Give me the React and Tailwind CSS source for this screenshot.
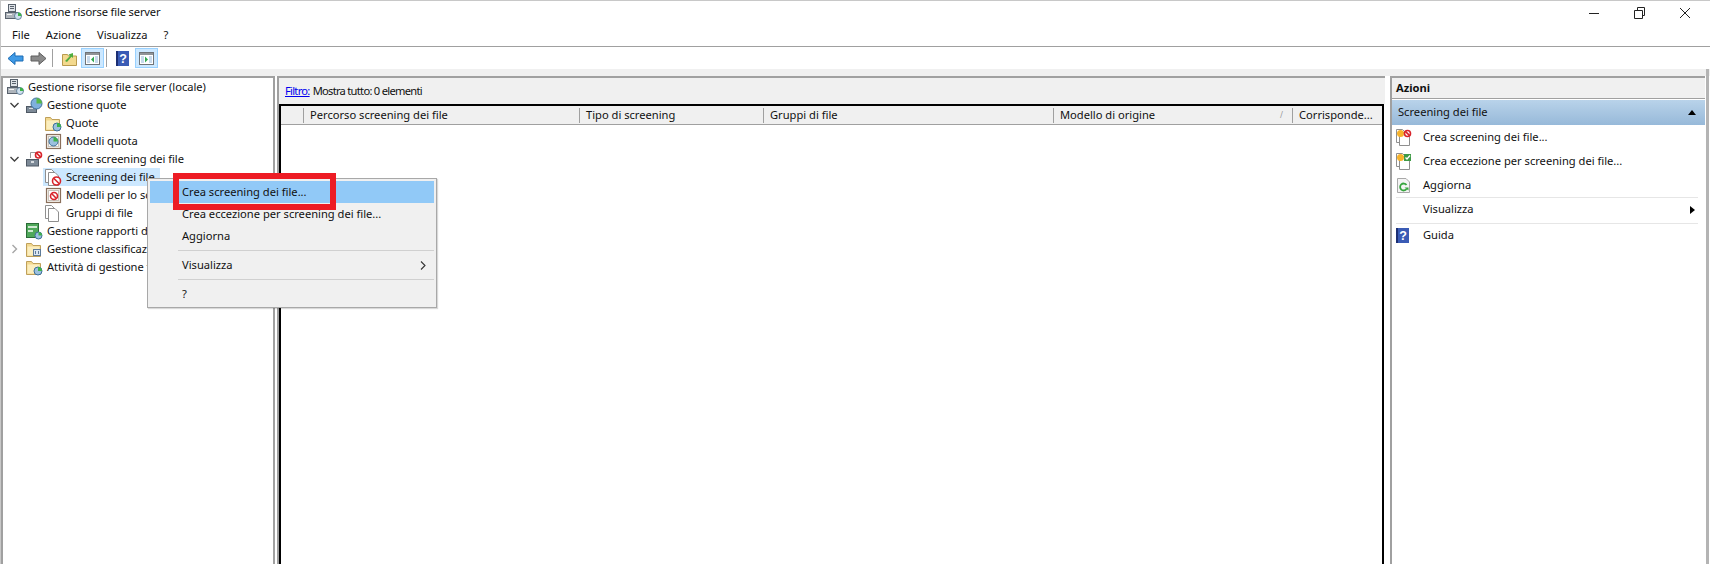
import React from "react";

const uiFont = { fontFamily: '"Noto Sans", "Open Sans", sans-serif' };

function ServerIcon() {
  return (
    <svg width="17" height="17" viewBox="0 0 17 17" className="shrink-0">
      <rect x="3.5" y="0.5" width="7" height="7" fill="#dfe3e8" stroke="#59626d" />
      <rect x="5" y="2" width="4" height="1" fill="#59626d" />
      <rect x="5" y="4" width="4" height="1" fill="#59626d" />
      <rect x="0.5" y="8.5" width="12" height="6" fill="#aeb4bb" stroke="#59626d" />
      <rect x="2" y="10" width="5" height="1" fill="#f4f4f4" />
      <circle cx="13" cy="12" r="3.5" fill="#cfe0ee" stroke="#4c6f8c" strokeWidth="0.8" />
      <path d="M13 12V8.5A3.5 3.5 0 0 1 16.5 12Z" fill="#3fb24a" />
    </svg>
  );
}

function QuotaIcon() {
  return (
    <svg width="17" height="17" viewBox="0 0 17 17" className="shrink-0">
      <rect x="0.5" y="9.5" width="10" height="6" fill="#7d8a97" stroke="#4f5964" />
      <rect x="3" y="11" width="4" height="1" fill="#d9dde1" />
      <circle cx="10.5" cy="6.5" r="5.5" fill="#7fb0dc" stroke="#3d6f99" />
      <path d="M10.5 6.5V1A5.5 5.5 0 0 1 16 6.5Z" fill="#58b947" />
    </svg>
  );
}

function FolderIcon({ children }) {
  return (
    <svg width="17" height="17" viewBox="0 0 17 17" className="shrink-0">
      <path d="M0.5 2.5H5.5L7 4.5H14.5V15.5H0.5Z" fill="#f2d88f" stroke="#bfa05a" />
      <rect x="1.5" y="5.5" width="12" height="9" fill="#fbeebf" />
      {children}
    </svg>
  );
}

function ClockBadge() {
  return (
    <>
      <circle cx="12" cy="12" r="4" fill="#9cc0de" stroke="#3d6f99" />
      <path d="M12 12V8A4 4 0 0 1 16 12Z" fill="#3fb24a" />
    </>
  );
}

function TemplateIcon({ children }) {
  return (
    <svg width="17" height="17" viewBox="0 0 17 17" className="shrink-0">
      <rect x="1.5" y="1.5" width="14" height="14" fill="#f6f3ee" stroke="#8a6f5b" strokeWidth="1.2" />
      <rect x="3.5" y="3.5" width="10" height="10" fill="#fff" stroke="#c9c3bb" />
      {children}
    </svg>
  );
}

function NoSign({ cx = 11, cy = 11, r = 4 }) {
  return (
    <>
      <circle cx={cx} cy={cy} r={r} fill="#fff" stroke="#d8242b" strokeWidth="1.6" />
      <path d={`M${cx - r * 0.7} ${cy - r * 0.7}L${cx + r * 0.7} ${cy + r * 0.7}`} stroke="#d8242b" strokeWidth="1.6" />
    </>
  );
}

function PageIcon({ children }) {
  return (
    <svg width="17" height="17" viewBox="0 0 17 17" className="shrink-0">
      <path d="M0.5 0.5H6.5L9.5 3.5V13.5H0.5Z" fill="#fff" stroke="#8f8f8f" />
      <path d="M3.5 3.5H10L13.5 7V16.5H3.5Z" fill="#fff" stroke="#8f8f8f" />
      {children}
    </svg>
  );
}

function Chevron({ open }) {
  return (
    <svg width="9" height="10" viewBox="0 0 9 10" className="shrink-0">
      {open ? (
        <path d="M0.5 3L4.5 7L8.5 3" fill="none" stroke="#404040" strokeWidth="1.4" />
      ) : (
        <path d="M2.5 1L6.5 5L2.5 9" fill="none" stroke="#a6a6a6" strokeWidth="1.4" />
      )}
    </svg>
  );
}

function TreeRow({ level, chevron, icon, label, selected }) {
  const indent = ["pl-[2px]", "pl-[7px]", "pl-[40px]"][level];
  return (
    <div className={`flex h-[18px] items-center whitespace-nowrap tracking-[-0.05px] ${indent}`}>
      {level === 1 && (
        <span className="flex w-[14px] shrink-0 items-center">{chevron && <Chevron open={chevron === "open"} />}</span>
      )}
      <span className={`flex h-[18px] items-center pl-[2px] ${selected ? "w-[117px] bg-[#cce8ff]" : ""}`}>
        {icon}
        <span className="ml-[4px]">{label}</span>
      </span>
    </div>
  );
}

function ToolBtn({ children }) {
  return (
    <span className="flex h-[20px] w-[23px] items-center justify-center border border-[#99d1ff] bg-[#cce8ff]">
      {children}
    </span>
  );
}

function PaneIcon({ arrowLeft }) {
  return (
    <svg width="15" height="13" viewBox="0 0 15 13">
      <rect x="0.5" y="0.5" width="14" height="12" fill="#fff" stroke="#6f7377" />
      <rect x="1" y="1" width="13" height="2" fill="#8f9397" />
      <rect x="2" y="4" width="3" height="7" fill="#c8daec" />
      <rect x="10" y="4" width="3" height="7" fill="#c8daec" />
      {arrowLeft ? <path d="M6 7.5L9 4.5V10.5Z" fill="#2fa84f" /> : <path d="M9 7.5L6 4.5V10.5Z" fill="#2fa84f" />}
    </svg>
  );
}

function Arrow({ left, fill, stroke }) {
  return (
    <svg width="17" height="15" viewBox="0 0 17 15" className="shrink-0">
      <path
        d={left ? "M1 7.5L8 1.5V5H16V10H8V13.5Z" : "M16 7.5L9 1.5V5H1V10H9V13.5Z"}
        fill={fill}
        stroke={stroke}
      />
    </svg>
  );
}

function HelpIcon() {
  return (
    <svg width="13" height="15" viewBox="0 0 13 15" className="shrink-0">
      <rect width="13" height="15" fill="#3a5bb5" />
      <rect width="2" height="15" fill="#1c2f73" />
      <text x="7" y="12" fontSize="12.5" fontWeight="700" fill="#fff" textAnchor="middle" fontFamily="Liberation Sans">
        ?
      </text>
    </svg>
  );
}

function ActionRow({ icon, label, arrow, height = "h-[24px]" }) {
  return (
    <div className={`flex items-center whitespace-nowrap pr-[3px] ${height}`}>
      <span className="flex w-[27px] shrink-0 items-center">{icon}</span>
      <span className="flex-1">{label}</span>
      {arrow && <span className="h-0 w-0 border-y-[4.5px] border-l-[5px] border-y-transparent border-l-black" />}
    </div>
  );
}

const columns = [
  ["w-[23px]", ""],
  ["w-[276px]", "Percorso screening dei file"],
  ["w-[184px]", "Tipo di screening"],
  ["w-[290px]", "Gruppi di file"],
  ["w-[239px]", "Modello di origine"],
  ["flex-1", "Corrisponde..."],
];

export default function App() {
  return (
    <div
      className="relative flex h-[564px] w-[1710px] flex-col overflow-hidden border-l border-t border-[#c8c8c8] bg-white text-[11.15px] text-[#111]"
      style={uiFont}
    >
      {/* Title bar */}
      <div className="flex h-[23px] shrink-0 items-center pl-[4px]">
        <ServerIcon />
        <span className="ml-[3px] flex-1 tracking-[-0.15px]">Gestione risorse file server</span>
        <svg width="102" height="14" viewBox="0 0 102 14" className="mr-[19px]">
          <path d="M0 7.5H10" stroke="#222" />
          <path d="M45.5 4.5H53.5V12.5H45.5ZM48.5 4.5V1.5H55.5V9.5H53.5" fill="none" stroke="#222" />
          <path d="M91 2L101 12M101 2L91 12" stroke="#222" />
        </svg>
      </div>

      {/* Menu bar */}
      <div className="flex h-[23px] shrink-0 items-center gap-[16px] border-b border-[#a0a0a0] pl-[11px]">
        <span>File</span>
        <span>Azione</span>
        <span>Visualizza</span>
        <span>?</span>
      </div>

      {/* Toolbar */}
      <div className="flex h-[22px] shrink-0 items-center pl-[6px]">
        <Arrow left fill="#3f9ae6" stroke="#1c6cb5" />
        <span className="ml-[6px]">
          <Arrow fill="#8b8b8b" stroke="#5f5f5f" />
        </span>
        <span className="ml-[5px] h-[18px] w-px bg-[#a0a0a0]" />
        <svg width="15" height="15" viewBox="0 0 15 15" className="ml-[9px]">
          <path d="M0.5 3.5H5.5L6.5 5H14.5V14.5H0.5Z" fill="#f3d98e" stroke="#b99a4d" />
          <path d="M3 10L8 5L6.5 3.5L11 2L11 7L9.5 5.8L5 11Z" fill="#4fae3f" />
        </svg>
        <span className="ml-[4px]">
          <ToolBtn>
            <PaneIcon arrowLeft />
          </ToolBtn>
        </span>
        <span className="ml-[2px] h-[18px] w-px bg-[#a0a0a0]" />
        <span className="ml-[9px]">
          <HelpIcon />
        </span>
        <span className="ml-[6px]">
          <ToolBtn>
            <PaneIcon />
          </ToolBtn>
        </span>
      </div>

      <div className="h-[7px] shrink-0 bg-[#f0f0f0]" />

      {/* Panels */}
      <div className="flex min-h-0 flex-1 gap-[2px] pr-px">
        {/* Tree */}
        <div className="w-[274px] shrink-0 border-2 border-b-0 border-[#a0a0a0] bg-white">
          <TreeRow level={0} icon={<ServerIcon />} label="Gestione risorse file server (locale)" />
          <TreeRow level={1} chevron="open" icon={<QuotaIcon />} label="Gestione quote" />
          <TreeRow level={2} icon={<FolderIcon><ClockBadge /></FolderIcon>} label="Quote" />
          <TreeRow
            level={2}
            icon={
              <TemplateIcon>
                <circle cx="8.5" cy="8.5" r="4.5" fill="#9cc0de" stroke="#3d6f99" />
                <path d="M8.5 8.5V4A4.5 4.5 0 0 1 13 8.5Z" fill="#3fb24a" />
              </TemplateIcon>
            }
            label="Modelli quota"
          />
          <TreeRow
            level={1}
            chevron="open"
            icon={
              <svg width="17" height="17" viewBox="0 0 17 17" className="shrink-0">
                <path d="M4.5 7V1.5H10V7" fill="#fff" stroke="#9a9a9a" />
                <rect x="0.5" y="8.5" width="12" height="6.5" fill="#7d8a97" stroke="#4f5964" />
                <rect x="5" y="10" width="3" height="2" fill="#d9dde1" />
                <NoSign cx={12.5} cy={4} r={3} />
              </svg>
            }
            label="Gestione screening dei file"
          />
          <TreeRow level={2} selected icon={<PageIcon><NoSign cx={11.5} cy={12} r={4} /></PageIcon>} label="Screening dei file" />
          <TreeRow level={2} icon={<TemplateIcon><NoSign cx={9} cy={9} r={3.5} /></TemplateIcon>} label="Modelli per lo screening" />
          <TreeRow level={2} icon={<PageIcon />} label="Gruppi di file" />
          <TreeRow
            level={1}
            icon={
              <svg width="17" height="17" viewBox="0 0 17 17" className="shrink-0">
                <rect x="0.5" y="0.5" width="12" height="14" fill="#4fa85a" stroke="#2a6b36" />
                <rect x="2" y="3" width="9" height="2" fill="#cfe9d2" />
                <rect x="2" y="7" width="5" height="2" fill="#cfe9d2" />
                <circle cx="12.5" cy="12.5" r="3.5" fill="#9cc0de" stroke="#3d6f99" />
                <path d="M12.5 12.5V9A3.5 3.5 0 0 1 16 12.5Z" fill="#3fb24a" />
              </svg>
            }
            label="Gestione rapporti di archiviazione"
          />
          <TreeRow
            level={1}
            chevron="closed"
            icon={
              <FolderIcon>
                <rect x="7.5" y="8.5" width="7" height="6" fill="#dbe6f1" stroke="#5d7a99" />
                <rect x="9" y="10" width="1" height="3" fill="#5d7a99" />
                <rect x="12" y="10" width="1" height="3" fill="#5d7a99" />
              </FolderIcon>
            }
            label="Gestione classificazione"
          />
          <TreeRow level={1} icon={<FolderIcon><ClockBadge /></FolderIcon>} label="Attività di gestione file" />
        </div>

        {/* Center list */}
        <div className="flex min-w-0 flex-1 flex-col border-l-2 border-t-2 border-[#a0a0a0]">
          <div className="flex h-[26px] shrink-0 items-center whitespace-nowrap bg-[#f0f0f0] pl-[6px] tracking-[-0.72px]">
            <span className="text-[#0000ee] underline">Filtro:</span>
            <span className="ml-[3px]">Mostra tutto: 0 elementi</span>
          </div>
          <div className="mr-px flex flex-1 flex-col border-l-2 border-r-2 border-t-2 border-black bg-white">
            <div className="flex h-[19px] shrink-0 items-center border-b border-[#a0a0a0] bg-[#f0f0f0]">
              {columns.map(([width, label], i) => (
                <div
                  key={i}
                  className={`relative flex h-[15px] items-center whitespace-nowrap pl-[6px] ${width} ${
                    i < columns.length - 1 ? "border-r border-[#a0a0a0]" : ""
                  }`}
                >
                  {label}
                  {i === 4 && <span className="absolute right-[9px] text-[8px] text-[#999]">/</span>}
                </div>
              ))}
            </div>
          </div>
        </div>

        {/* Actions */}
        <div className="ml-[3px] w-[315px] shrink-0 border-l-2 border-t-2 border-[#a0a0a0] bg-white">
          <div className="flex h-[21px] items-center border-b border-[#a0a0a0] bg-[#f0f0f0] pl-[4px] font-bold">Azioni</div>
          <div className="mt-px flex h-[25px] items-center justify-between bg-gradient-to-b from-[#b9d3ea] to-[#97b9d9] pl-[6px] pr-[9px]">
            <span>Screening dei file</span>
            <span className="h-0 w-0 border-x-[4.5px] border-b-[5px] border-x-transparent border-b-black" />
          </div>
          <div className="ml-[4px] mr-[7px]">
            <ActionRow
              label="Crea screening dei file..."
              icon={
                <PageIcon>
                  <circle cx="4.5" cy="4.5" r="3.5" fill="#f7b32b" />
                  <NoSign cx={11.5} cy={4.5} r={3} />
                </PageIcon>
              }
            />
            <ActionRow
              label="Crea eccezione per screening dei file..."
              icon={
                <PageIcon>
                  <circle cx="4.5" cy="4.5" r="3.5" fill="#f7b32b" />
                  <rect x="8" y="1" width="7" height="7" fill="#3e9b46" />
                  <path d="M9.5 4.5L11 6L14 2.5" fill="none" stroke="#fff" strokeWidth="1.3" />
                </PageIcon>
              }
            />
            <div className="border-b border-[#e6e6e6]">
              <ActionRow
                label="Aggiorna"
                icon={
                  <svg width="15" height="17" viewBox="0 0 15 17" className="shrink-0">
                    <path d="M1.5 1.5H10L13.5 5V15.5H1.5Z" fill="#f4f4f4" stroke="#a8a8a8" />
                    <path d="M10.5 8A3.5 3.5 0 1 0 10.5 12" fill="none" stroke="#37a53f" strokeWidth="1.8" />
                    <path d="M8.5 10.5H12.5V13.5Z" fill="#37a53f" />
                  </svg>
                }
              />
            </div>
            <div className="border-b border-[#e6e6e6] pb-[2px]">
              <ActionRow label="Visualizza" arrow height="h-[23px]" />
            </div>
            <ActionRow label="Guida" icon={<HelpIcon />} height="h-[22px]" />
          </div>
        </div>

        {/* Window edge */}
        <div className="-mt-[7px] -ml-px w-[3px] shrink-0 bg-[#b4b4b4]" />
      </div>

      {/* Context menu */}
      <div className="absolute left-[146px] top-[177px] w-[290px] border border-[#a8a8a8] bg-[#f0f0f0] p-[2px] shadow-[1px_1px_1px_rgba(0,0,0,0.15)]">
        <div className="flex h-[22px] items-center bg-[#91c9f7] pl-[32px]">Crea screening dei file...</div>
        <div className="flex h-[22px] items-center pl-[32px]">Crea eccezione per screening dei file...</div>
        <div className="flex h-[22px] items-center pl-[32px]">Aggiorna</div>
        <div className="my-[3px] ml-[28px] h-px bg-[#d0d0d0]" />
        <div className="flex h-[22px] items-center justify-between pl-[32px] pr-[8px]">
          <span>Visualizza</span>
          <svg width="6" height="9" viewBox="0 0 6 9">
            <path d="M1 0.5L5 4.5L1 8.5" fill="none" stroke="#333" strokeWidth="1.1" />
          </svg>
        </div>
        <div className="my-[3px] ml-[28px] h-px bg-[#d0d0d0]" />
        <div className="flex h-[22px] items-center pl-[32px]">?</div>
      </div>

      {/* Red annotation */}
      <div className="absolute left-[172px] top-[172px] h-[37px] w-[163px] border-[6px] border-[#ed1c24]" />
    </div>
  );
}
